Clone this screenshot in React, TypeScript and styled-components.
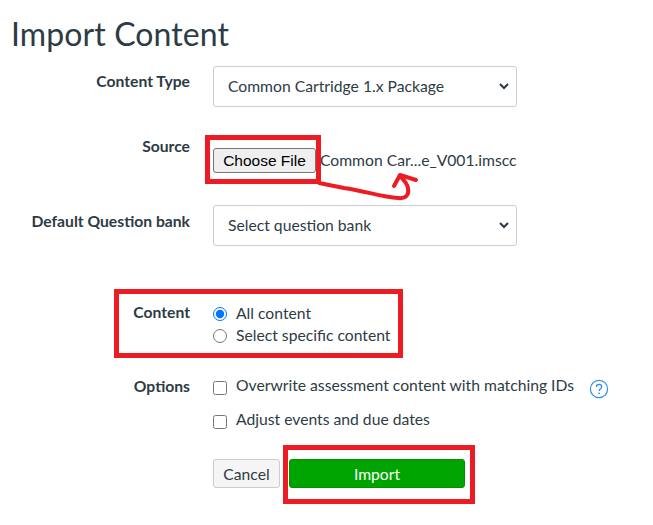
import React from 'react';
import styled, { createGlobalStyle } from 'styled-components';

const GlobalStyle = createGlobalStyle`
  html, body {
    margin: 0;
    padding: 0;
    background: #fff;
  }
  body {
    font-family: Lato, "Liberation Sans", sans-serif;
    color: #2d3b45;
  }
`;

const Page = styled.div`
  position: relative;
  width: 653px;
  height: 525px;
  overflow: hidden;
`;

const Title = styled.h1`
  margin: 0;
  padding: 14px 0 0 11px;
  height: 52px;
  font-size: 32px;
  line-height: 40px;
  font-weight: 400;
  letter-spacing: 0.1px;
`;

const Form = styled.form`
  display: flex;
  flex-direction: column;
`;

const Row = styled.div<{ $height: number }>`
  display: grid;
  grid-template-columns: 190px 1fr;
  column-gap: 23px;
  height: ${(p) => p.$height}px;
`;

const Label = styled.div<{ $top?: number }>`
  text-align: right;
  font-size: 15.7px;
  line-height: 20px;
  font-weight: 700;
  padding-top: ${(p) => p.$top ?? 0}px;
`;

const SelectBox = styled.div`
  position: relative;
  width: 304px;
  height: 41px;
`;

const Select = styled.select`
  display: block;
  width: 100%;
  height: 100%;
  padding: 0 13px 2px 14px;
  appearance: none;
  background: #fff;
  border: 1px solid #c7cdd1;
  border-radius: 3px;
  color: #2d3b45;
  font-family: Lato, sans-serif;
  font-size: 15.7px;
`;

const Chevron = styled.svg`
  position: absolute;
  right: 8px;
  top: 17px;
  pointer-events: none;
`;

const FileRow = styled.div`
  display: flex;
  align-items: center;
  gap: 4px;
  align-self: start;
  margin-top: 12px;
`;

const FileButton = styled.button`
  width: 103px;
  height: 25px;
  padding: 0;
  background: #efefef;
  border: 1px solid #767676;
  border-radius: 3px;
  color: #000;
  font-family: "Liberation Sans", Arial, sans-serif;
  font-size: 15.5px;
`;

const FileName = styled.span`
  font-family: Lato, sans-serif;
  font-size: 15.7px;
  white-space: nowrap;
  padding-bottom: 1px;
`;

const Choice = styled.label<{ $gap?: number }>`
  display: flex;
  align-items: center;
  height: 22px;
  margin-bottom: ${(p) => p.$gap ?? 0}px;
  font-size: 15.7px;
  line-height: 20px;
`;

const Radio = styled.input.attrs({ type: 'radio' })`
  width: 14px;
  height: 14px;
  margin: 1px 9px 0 0;
  accent-color: #0075ff;
`;

const Checkbox = styled.input.attrs({ type: 'checkbox' })`
  width: 14px;
  height: 14px;
  margin: 5px 9px 0 0;
`;

const HelpIcon = styled.svg`
  width: 20px;
  height: 20px;
  margin: 7px 0 0 15px;
  color: #2d8ceb;
`;

const Actions = styled.div`
  display: flex;
  gap: 9px;
  padding-left: 213px;
`;

const CancelButton = styled.button`
  width: 67px;
  height: 29px;
  padding: 0;
  background: #f5f5f5;
  border: 1px solid #c7cdd1;
  border-radius: 3px;
  color: #2d3b45;
  font-family: Lato, sans-serif;
  font-size: 15.7px;
`;

const ImportButton = styled.button`
  width: 176px;
  height: 29px;
  padding: 0;
  background: #00a400;
  border: 1px solid #009200;
  border-radius: 3px;
  color: #fff;
  font-family: Lato, sans-serif;
  font-size: 15.7px;
`;

// red annotation boxes drawn over the form
const Highlight = styled.div<{ $x: number; $y: number; $w: number; $h: number }>`
  position: absolute;
  left: ${(p) => p.$x}px;
  top: ${(p) => p.$y}px;
  width: ${(p) => p.$w}px;
  height: ${(p) => p.$h}px;
  box-sizing: border-box;
  border: 5px solid #ed1c24;
  pointer-events: none;
`;

const Arrow = styled.svg`
  position: absolute;
  left: 310px;
  top: 165px;
  pointer-events: none;
`;

const SelectField = ({ text }: { text: string }) => (
  <SelectBox>
    <Select defaultValue="a">
      <option value="a">{text}</option>
    </Select>
    <Chevron width="10" height="7" viewBox="0 0 10 7" fill="none" stroke="#2d3b45" strokeWidth="2">
      <path d="M1 1 L5 5 L9 1" />
    </Chevron>
  </SelectBox>
);

export default function App() {
  return (
    <Page>
      <GlobalStyle />
      <Title>Import Content</Title>
      <Form>
        <Row $height={70}>
          <Label $top={5}>Content Type</Label>
          <SelectField text="Common Cartridge 1.x Package" />
        </Row>
        <Row $height={69}>
          <Label>Source</Label>
          <FileRow>
            <FileButton type="button">Choose File</FileButton>
            <FileName>Common Car...e_V001.imscc</FileName>
          </FileRow>
        </Row>
        <Row $height={97}>
          <Label $top={6}>Default Question bank</Label>
          <SelectField text="Select question bank" />
        </Row>
        <Row $height={72}>
          <Label>Content</Label>
          <div>
            <Choice>
              <Radio name="content" defaultChecked />
              All content
            </Choice>
            <Choice>
              <Radio name="content" />
              Select specific content
            </Choice>
          </div>
        </Row>
        <Row $height={85}>
          <Label $top={2}>Options</Label>
          <div>
            <Choice $gap={12}>
              <Checkbox />
              Overwrite assessment content with matching IDs
              <HelpIcon viewBox="0 0 20 20" fill="none" stroke="currentColor">
                <circle cx="10" cy="10" r="8.6" strokeWidth="1.2" />
                <path d="M7.4 8c0-1.6 1.2-2.6 2.7-2.6s2.6 1 2.6 2.3c0 2-2.6 2.1-2.6 4.3" strokeWidth="1.3" />
                <circle cx="10.1" cy="14.3" r="0.9" fill="currentColor" stroke="none" />
              </HelpIcon>
            </Choice>
            <Choice>
              <Checkbox />
              Adjust events and due dates
            </Choice>
          </div>
        </Row>
        <Actions>
          <CancelButton type="button">Cancel</CancelButton>
          <ImportButton type="button">Import</ImportButton>
        </Actions>
      </Form>

      <Highlight $x={205} $y={135} $w={116} $h={49} />
      <Highlight $x={114} $y={289} $w={289} $h={69} />
      <Highlight $x={283} $y={445} $w={192} $h={59} />
      <Arrow width="115" height="40" viewBox="0 0 115 40" fill="none" stroke="#ed1c24" strokeWidth="4" strokeLinecap="round" strokeLinejoin="round">
        <path d="M9 18 L34 23 C55 26 72 32 88 33 C97 34 99 29 98 23 C97 18 94 15 90 11" />
        <path d="M84 21 L90 10 L106 15" />
      </Arrow>
    </Page>
  );
}
